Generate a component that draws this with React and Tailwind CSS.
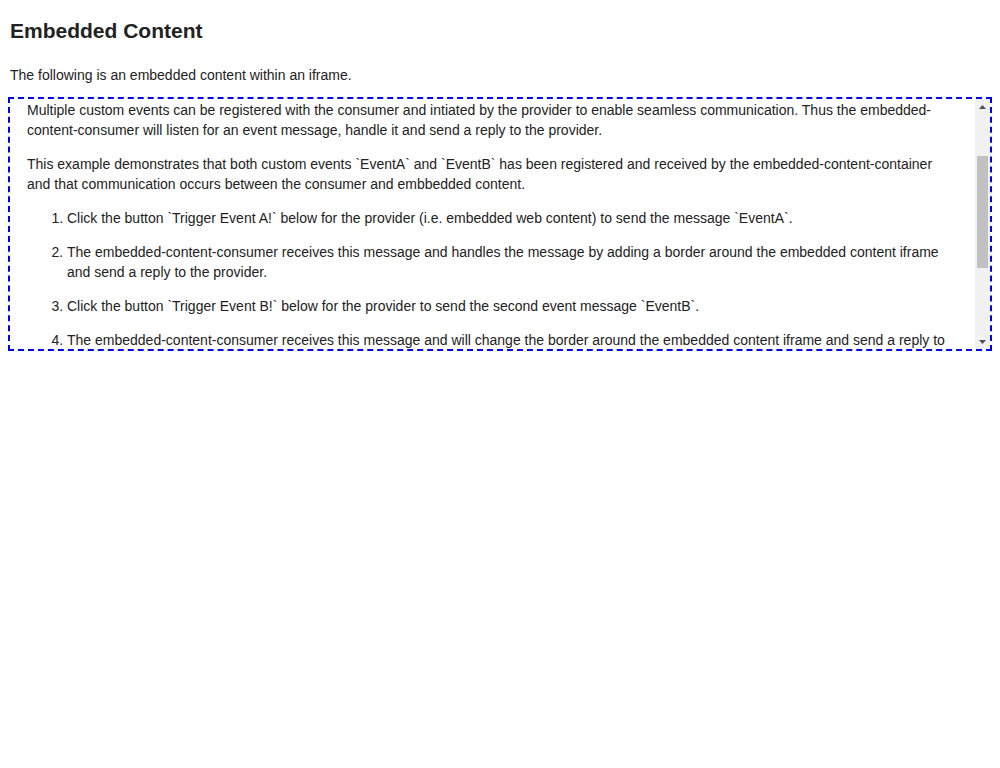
import React from "react";

function FakeScrollbar() {
  return (
    <div className="flex w-[15px] shrink-0 flex-col bg-[#f1f1f1]">
      <div className="flex h-[15px] items-center justify-center">
        <svg width="7" height="4" viewBox="0 0 7 4">
          <polygon points="0,4 7,4 3.5,0" fill="#505050" />
        </svg>
      </div>
      <div className="flex flex-1 flex-col px-[2px] pt-[42px]">
        <div className="h-[112px] bg-[#c1c1c1]" />
      </div>
      <div className="flex h-[15px] items-center justify-center">
        <svg width="7" height="4" viewBox="0 0 7 4">
          <polygon points="0,0 7,0 3.5,4" fill="#505050" />
        </svg>
      </div>
    </div>
  );
}

export default function App() {
  return (
    <div
      className="min-h-screen bg-white px-2 pt-[19px] text-[#222]"
      style={{ fontFamily: '"Liberation Sans", Arial, sans-serif' }}
    >
      <h1 className="pl-[2px] text-[21px] font-bold leading-[24px]">
        Embedded Content
      </h1>
      <p className="mt-[22px] pl-[2px] text-[14px] leading-[20px]">
        The following is an embedded content within an iframe.
      </p>

      {/* iframe stand-in */}
      <div className="mt-[12px] flex h-[254px] border-2 border-dashed border-[#0000ee]">
        <div className="flex-1 overflow-hidden pl-[17px] pr-[18px] pt-[1px] text-[14px] leading-[20px]">
          <p>
            Multiple custom events can be registered with the consumer and
            intiated by the provider to enable seamless communication. Thus the
            embedded-content-consumer will listen for an event message, handle
            it and send a reply to the provider.
          </p>
          <p className="mt-[14px]">
            This example demonstrates that both custom events `EventA` and
            `EventB` has been registered and received by the
            embedded-content-container and that communication occurs between
            the consumer and embbedded content.
          </p>
          <ol className="mt-[14px] list-decimal pl-10">
            <li>
              Click the button `Trigger Event A!` below for the provider (i.e.
              embedded web content) to send the message `EventA`.
            </li>
            <li className="mt-[14px]">
              The embedded-content-consumer receives this message and handles
              the message by adding a border around the embedded content iframe
              and send a reply to the provider.
            </li>
            <li className="mt-[14px]">
              Click the button `Trigger Event B!` below for the provider to send
              the second event message `EventB`.
            </li>
            <li className="mt-[14px]">
              The embedded-content-consumer receives this message and will
              change the border around the embedded content iframe and send a
              reply to the provider.
            </li>
          </ol>
        </div>
        <FakeScrollbar />
      </div>
    </div>
  );
}
